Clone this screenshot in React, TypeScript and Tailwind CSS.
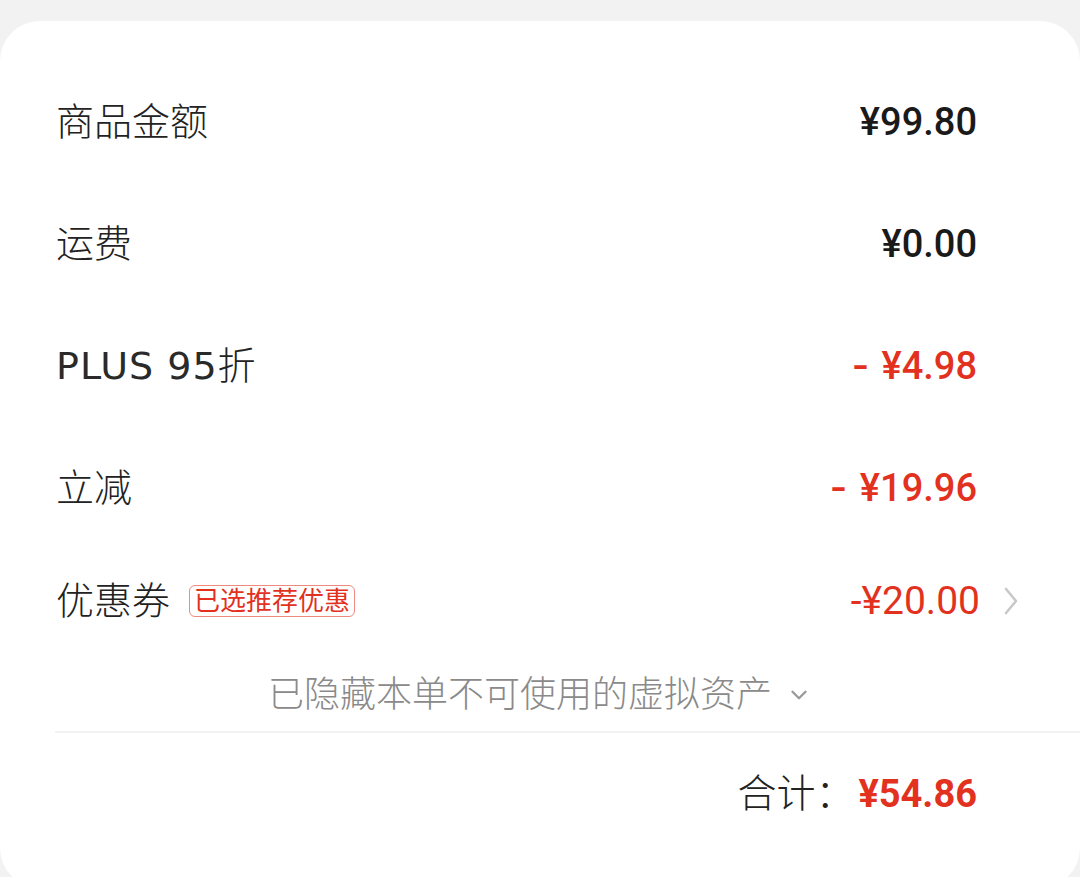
import { ChevronDown } from "lucide-react";

const labelFont = "font-['DejaVu_Sans','Noto_Sans_CJK_SC',sans-serif]";
const numFont = "font-['Roboto','Noto_Sans_CJK_SC',sans-serif]";

type Row = { label: string; latin?: string; amount: string; red?: boolean };

const rows: Row[] = [
    { label: "商品金额", amount: "¥99.80" },
    { label: "运费", amount: "¥0.00" },
    { latin: "PLUS 95", label: "折", amount: "¥4.98", red: true },
    { label: "立减", amount: "¥19.96", red: true },
];

export default function App() {
    return (
        <div className={`h-[877px] overflow-hidden bg-[#f2f2f2] pt-[21px] ${labelFont}`}>
            <div className="rounded-[40px] bg-white pt-[40px] pb-[33px]">
                {/* price rows */}
                {rows.map((row) => (
                    <div key={row.label} className="flex h-[122px] items-center pl-[56px] pr-[60px]">
                        <span className="flex-1 text-[38px] text-[#222]">
                            {row.latin && <span className="font-normal tracking-[1px] text-[#2a2a2a]">{row.latin}</span>}
                            <span className="font-light">{row.label}</span>
                        </span>
                        <span
                            className={`flex items-center gap-[15px] text-[38px] font-medium ${numFont} ${
                                row.red ? "text-[#e2321f]" : "text-[#1a1a1a]"
                            }`}
                        >
                            {row.red && <span className="scale-x-125">-</span>}
                            <span>{row.amount}</span>
                        </span>
                        <span className="w-[43px]" />
                    </div>
                ))}

                {/* coupon */}
                <div className="flex h-[104px] items-center pl-[56px] pr-[60px]">
                    <span className="text-[38px] font-light text-[#222]">优惠券</span>
                    <span className="ml-[19px] rounded-[6px] border border-[#ef8a80] px-[4px] text-[26px] leading-[30px] text-[#e2321f]">
                        已选推荐优惠
                    </span>
                    <span className="flex-1" />
                    <span className={`text-[39px] text-[#e2321f] ${numFont}`}>-¥20.00</span>
                    <svg className="ml-[23px]" width="16" height="28" viewBox="0 0 16 28" fill="none">
                        <path d="M3 2 L13 14 L3 26" stroke="#c8c8c8" strokeWidth="2.6" strokeLinecap="round" strokeLinejoin="round" />
                    </svg>
                    <span className="w-[1px]" />
                </div>

                {/* hidden assets */}
                <div className="flex h-[78px] items-center justify-center gap-[14px] pt-[6px]">
                    <span className="text-[36px] font-light text-[#8a8a8a]">已隐藏本单不可使用的虚拟资产</span>
                    <ChevronDown className="h-[26px] w-[26px] text-[#9a9a9a]" strokeWidth={2.2} />
                </div>

                <div className="ml-[55px] border-t-2 border-[#f2f2f2]" />

                {/* total */}
                <div className="flex h-[122px] items-center justify-end pr-[103px]">
                    <span className="mr-[4px] text-[39px] font-light text-[#222]">合计：</span>
                    <span className={`text-[38px] font-bold text-[#e2321f] ${numFont}`}>¥54.86</span>
                </div>
            </div>
        </div>
    );
}
